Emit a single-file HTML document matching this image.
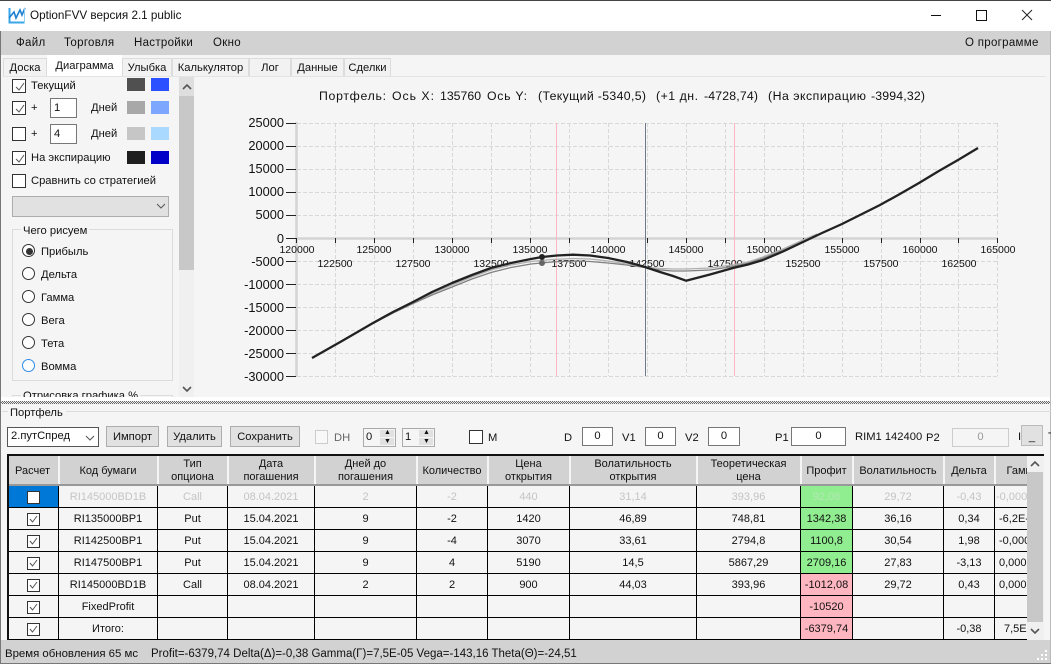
<!DOCTYPE html>
<html><head><meta charset="utf-8"><style>
html,body{margin:0;padding:0;background:#f5f5f5}
#w{position:relative;width:1051px;height:664px;overflow:hidden;background:#f5f5f5;font:11.2px "Liberation Sans","Noto Sans CJK SC",sans-serif;color:#111}
#w div,#w span.a{position:absolute;box-sizing:border-box}
.t{white-space:nowrap;line-height:14px}
.m{font-size:11.5px;letter-spacing:.3px}
.tab{top:58px;height:18px;background:#f2f2f2;border:1px solid #dcdcdc;border-bottom:0;text-align:center;line-height:18px;white-space:nowrap}
.cb{width:14px;height:14px;border:1px solid #333;background:#fff}
.cb svg{position:absolute;left:1px;top:1px}
.sw{width:18px;height:13px}
.in{border:1px solid #777;background:#fff;text-align:center;line-height:17px}
.btn{background:#e1e1e1;border:1px solid #adadad;text-align:center;line-height:18px;white-space:nowrap}
.rb{width:13px;height:13px;border:1px solid #333;border-radius:50%;background:#fff}
table{border-collapse:collapse;table-layout:fixed;position:absolute;left:-1px;top:0}
td{border:1px solid #000;padding:2px 0 0;text-align:center;height:19px;line-height:13px;white-space:nowrap;overflow:hidden;font-size:11px}
tr.h td{background:#d2d2d2;height:26px;padding-top:2px;border:0;border-right:2px solid #f5f5f5;border-bottom:2px solid #999;white-space:normal}
tr.g td{color:#c4c4c4}
.p{background:#90ee90}.n{background:#ffb6c1}
td svg{vertical-align:middle}
</style></head><body><div id="w">

<!-- title bar -->
<div style="left:0;top:0;width:1051px;height:31px;background:#fff;border-top:1px solid #444"></div>
<svg style="position:absolute;left:8px;top:6px" width="18" height="18" viewBox="0 0 18 18"><path d="M1.5 2V16.5H16.5" fill="none" stroke="#3aa6e8" stroke-width="2"/><path d="M1 12L6 6L8 12L12 4L14 9L17 2" fill="none" stroke="#1c7fd0" stroke-width="1.6"/><path d="M16.5 2V16" stroke="#8fd0f5" stroke-width="1"/></svg>
<div class="t" style="left:30px;top:9px;font-size:11.7px">OptionFVV версия 2.1 public</div>
<div style="left:931px;top:15px;width:10px;height:1px;background:#111"></div>
<div style="left:976px;top:10px;width:11px;height:11px;border:1px solid #111"></div>
<svg style="position:absolute;left:1021px;top:9px" width="12" height="12"><path d="M1 1L11 11M11 1L1 11" stroke="#222" stroke-width="1"/></svg>

<!-- menu -->
<div style="left:1px;top:31px;width:1050px;height:24px;background:#d2d2d2"></div>
<div class="t m" style="left:16px;top:36px">Файл</div>
<div class="t m" style="left:64px;top:36px">Торговля</div>
<div class="t m" style="left:134px;top:36px">Настройки</div>
<div class="t m" style="left:213px;top:36px">Окно</div>
<div class="t m" style="left:965px;top:36px">О программе</div>

<!-- tabs -->
<div class="tab" style="left:3px;width:44px">Доска</div>
<div class="tab" style="left:122px;width:50px">Улыбка</div>
<div class="tab" style="left:172px;width:77px">Калькулятор</div>
<div class="tab" style="left:249px;width:42px">Лог</div>
<div class="tab" style="left:291px;width:53px">Данные</div>
<div class="tab" style="left:344px;width:47px">Сделки</div>
<div class="tab" style="left:47px;top:55px;width:75px;height:22px;background:#fff;border:0;line-height:23px;">Диаграмма</div>
<div style="left:3px;top:76px;width:1043px;height:1px;background:#e4e4e4"></div>
<div style="left:0;top:31px;width:1px;height:633px;background:#777"></div>
<div style="left:1050px;top:31px;width:1px;height:633px;background:#bbb"></div>

<!-- left panel -->
<div style="left:3px;top:77px;width:191px;height:320px;overflow:hidden">
 <div class="cb" style="left:9px;top:2px"><svg width="12" height="12"><path d="M2 6L5 9L10 2" fill="none" stroke="#555" stroke-width="1"/></svg></div>
 <div class="t" style="left:28px;top:2px">Текущий</div>
 <div class="sw" style="left:124px;top:1px;background:#505050"></div>
 <div class="sw" style="left:148px;top:1px;background:#2b50ff"></div>

 <div class="cb" style="left:9px;top:24px"><svg width="12" height="12"><path d="M2 6L5 9L10 2" fill="none" stroke="#555" stroke-width="1"/></svg></div>
 <div class="t" style="left:28px;top:24px">+</div>
 <div class="in" style="left:47px;top:21px;width:27px;height:20px;text-align:left;padding-left:3px;line-height:18px">1</div>
 <div class="t" style="left:88px;top:24px">Дней</div>
 <div class="sw" style="left:124px;top:24px;background:#a8a8a8"></div>
 <div class="sw" style="left:148px;top:24px;background:#7da7ff"></div>

 <div class="cb" style="left:9px;top:50px"></div>
 <div class="t" style="left:28px;top:50px">+</div>
 <div class="in" style="left:47px;top:47px;width:27px;height:20px;text-align:left;padding-left:3px;line-height:18px">4</div>
 <div class="t" style="left:88px;top:50px">Дней</div>
 <div class="sw" style="left:124px;top:50px;background:#c6c6c6"></div>
 <div class="sw" style="left:148px;top:50px;background:#a9d9ff"></div>

 <div class="cb" style="left:9px;top:74px"><svg width="12" height="12"><path d="M2 6L5 9L10 2" fill="none" stroke="#555" stroke-width="1"/></svg></div>
 <div class="t" style="left:28px;top:74px">На экспирацию</div>
 <div class="sw" style="left:124px;top:74px;background:#1e1e1e"></div>
 <div class="sw" style="left:148px;top:74px;background:#0000c8"></div>

 <div class="cb" style="left:9px;top:97px"></div>
 <div class="t" style="left:28px;top:97px">Сравнить со стратегией</div>

 <div style="left:9px;top:119px;width:157px;height:21px;background:#e1e1e1;border:1px solid #adadad"></div>
 <svg style="position:absolute;left:153px;top:126px" width="10" height="7"><path d="M1 1L5 5L9 1" fill="none" stroke="#555"/></svg>

 <div style="left:9px;top:152px;width:161px;height:152px;border:1px solid #dcdcdc"></div>
 <div class="t" style="left:18px;top:147px;background:#f5f5f5;padding:0 2px">Чего рисуем</div>
 <div class="rb" style="left:19px;top:167px"></div><div style="left:23px;top:171px;width:7px;height:7px;border-radius:50%;background:#333"></div>
 <div class="t" style="left:38px;top:168px">Прибыль</div>
 <div class="rb" style="left:19px;top:190px"></div><div class="t" style="left:38px;top:191px">Дельта</div>
 <div class="rb" style="left:19px;top:213px"></div><div class="t" style="left:38px;top:214px">Гамма</div>
 <div class="rb" style="left:19px;top:236px"></div><div class="t" style="left:38px;top:237px">Вега</div>
 <div class="rb" style="left:19px;top:259px"></div><div class="t" style="left:38px;top:260px">Тета</div>
 <div class="rb" style="left:19px;top:282px;border-color:#2d8ceb"></div><div class="t" style="left:38px;top:283px">Вомма</div>

 <div style="left:9px;top:318px;width:161px;height:30px;border:1px solid #dcdcdc"></div>
 <div class="t" style="left:18px;top:312px;background:#f5f5f5;padding:0 2px">Отрисовка графика %</div>

 <!-- scrollbar -->
 <div style="left:176px;top:0;width:16px;height:320px;background:#f0f0f0"></div>
 <div style="left:176px;top:19px;width:16px;height:174px;background:#c8c8c8"></div>
 <div style="left:176px;top:0;width:16px;height:19px;background:#dedede"></div>
 <svg style="position:absolute;left:179px;top:7px" width="10" height="7"><path d="M1 5L5 1L9 5" fill="none" stroke="#555" stroke-width="1.6"/></svg>
 <svg style="position:absolute;left:179px;top:309px" width="10" height="7"><path d="M1 1L5 5L9 1" fill="none" stroke="#555" stroke-width="1.6"/></svg>
</div>

<!-- chart -->
<svg style="position:absolute;left:195px;top:77px" width="856" height="323" viewBox="195 77 856 323" font-family="Liberation Sans" fill="#111">
 <g font-size="12.3">
 <text x="319" y="100" textLength="67">Портфель:</text><text x="392" y="100" textLength="42">Ось X:</text><text x="440" y="100">135760</text><text x="487" y="100" textLength="40">Ось Y:</text><text x="538" y="100" textLength="108">(Текущий -5340,5)</text><text x="656" y="100" textLength="42">(+1 дн.</text><text x="704" y="100" textLength="54">-4728,74)</text><text x="768" y="100" textLength="98">(На экспирацию</text><text x="871" y="100" textLength="54">-3994,32)</text>
 </g>
 <g id="grid" stroke="#d8d8d8" stroke-width="1" stroke-dasharray="4 2" shape-rendering="crispEdges">
  <path d="M335.5 123V376M374.5 123V376M413.5 123V376M452.5 123V376M491.5 123V376M530.5 123V376M569.5 123V376M608.5 123V376M647.5 123V376M686.5 123V376M725.5 123V376M764.5 123V376M803.5 123V376M842.5 123V376M881.5 123V376M920.5 123V376M958.5 123V376M997.5 123V376"/>
  <path d="M297 123.5H998M297 146.5H998M297 169.5H998M297 192.5H998M297 215.5H998M297 261.5H998M297 284.5H998M297 307.5H998M297 330.5H998M297 353.5H998M297 376.5H998"/>
 </g>
 <path d="M296.5 122V377" stroke="#d4d4d4" stroke-width="2.5"/>
 <path d="M296 238.5H998" stroke="#d4d4d4" stroke-width="2.5"/>
 <path d="M286 123.5H296M286 146.5H296M286 169.5H296M286 192.5H296M286 215.5H296M286 238.5H296M286 261.5H296M286 284.5H296M286 307.5H296M286 330.5H296M286 353.5H296M286 376.5H296" stroke="#222" shape-rendering="crispEdges"/>
 <path d="M296.5 238V243M335.5 238V243M374.5 238V243M413.5 238V243M452.5 238V243M491.5 238V243M530.5 238V243M569.5 238V243M608.5 238V243M647.5 238V243M686.5 238V243M725.5 238V243M764.5 238V243M803.5 238V243M842.5 238V243M881.5 238V243M920.5 238V243M958.5 238V243M997.5 238V243" stroke="#222" shape-rendering="crispEdges"/>
 <path d="M556.5 123V376M734.5 123V376" stroke="#ffb6c1" shape-rendering="crispEdges"/>
 <path d="M645.5 123V376" stroke="#6e7a88" shape-rendering="crispEdges"/>
 <g font-size="12.8" text-anchor="end">
  <text x="284" y="127">25000</text><text x="284" y="150">20000</text><text x="284" y="173">15000</text><text x="284" y="196">10000</text><text x="284" y="219">5000</text><text x="284" y="243">0</text><text x="284" y="266">-5000</text><text x="284" y="289">-10000</text><text x="284" y="312">-15000</text><text x="284" y="335">-20000</text><text x="284" y="358">-25000</text><text x="284" y="381">-30000</text>
 </g>
 <g font-size="10.5" text-anchor="middle">
  <text x="297" y="253">120000</text><text x="374" y="253">125000</text><text x="452" y="253">130000</text><text x="530" y="253">135000</text><text x="608" y="253">140000</text><text x="686" y="253">145000</text><text x="764" y="253">150000</text><text x="842" y="253">155000</text><text x="920" y="253">160000</text><text x="998" y="253">165000</text>
  <text x="335" y="267">122500</text><text x="413" y="267">127500</text><text x="491" y="267">132500</text><text x="569" y="267">137500</text><text x="647" y="267">142500</text><text x="725" y="267">147500</text><text x="803" y="267">152500</text><text x="881" y="267">157500</text><text x="959" y="267">162500</text>
 </g>
 <polyline points="373,323.5 393,313 413,303.5 432,295 452,287 472,279 491,272.5 511,267.5 531,264 552,262 573,261 590,261.5 608,263 627,265 645,267.5 660,270 673,271 686,271 710,270 733,266.5 748,263 763,258 783,250 803,241 817,235" fill="none" stroke="#808080" stroke-width="1.3" stroke-linejoin="round"/>
 <polyline points="373,323 393,312.5 413,302.5 432,293.5 452,285 472,277 491,270 511,265 531,261.5 552,259.5 573,258.5 590,259 608,261 627,264 645,267 660,268.5 673,269 686,269 710,268 733,265 748,262 763,257 783,249 803,240 817,234" fill="none" stroke="#b0b0b0" stroke-width="1.3" stroke-linejoin="round"/>
 <polyline points="312,358 342,341 373,323 393,312 413,302 432,292 452,283 472,275 491,268 511,263 531,259 542,257 557,255.5 573,254.7 590,255.5 608,258 627,262 645,267 660,272 673,276 686,280.7 710,274.5 733,268 748,264.5 763,260 783,251.5 803,242 822,233 842,224 861,214.5 880,205 899,194.5 919,183 938,171.5 958,160 978,148" fill="none" stroke="#222" stroke-width="2.3" stroke-linejoin="round"/>
 <circle cx="542" cy="257" r="3" fill="#222"/><circle cx="542" cy="263" r="3" fill="#666"/>
</svg>

<!-- splitter -->
<div style="left:1px;top:397px;width:1049px;height:4px;background:#fff"></div>
<div style="left:1px;top:401px;width:1049px;height:3px;background:repeating-conic-gradient(#666 0 25%,#eee 0 50%) 0 0/2px 2px"></div>

<!-- portfolio -->
<div style="left:2px;top:411px;width:1049px;height:1px;background:#dcdcdc"></div>
<div class="t" style="left:8px;top:406px;background:#f5f5f5;padding:0 3px 0 2px">Портфель</div>
<div class="in" style="left:7px;top:427px;width:92px;height:20px;text-align:left;padding-left:3px;border-color:#555">2.путСпред</div>
<svg style="position:absolute;left:85px;top:435px" width="10" height="7"><path d="M1 1L5 5L9 1" fill="none" stroke="#555"/></svg>
<div class="btn" style="left:106px;top:426px;width:53px;height:21px;line-height:20px">Импорт</div>
<div class="btn" style="left:167px;top:426px;width:55px;height:21px;line-height:20px">Удалить</div>
<div class="btn" style="left:230px;top:426px;width:70px;height:21px;line-height:20px">Сохранить</div>
<div style="left:315px;top:430px;width:13px;height:14px;border:1px solid #ccc;background:#f8f8f8"></div>
<div class="t" style="left:334px;top:431px;color:#666">DH</div>
<div class="in" style="left:363px;top:428px;width:33px;height:19px;border-color:#aaa;text-align:left;padding-left:2px;background:#f5f5f5">0</div>
<div style="left:380px;top:430px;width:14px;height:7px;background:#e1e1e1"></div><div style="left:380px;top:438px;width:14px;height:7px;background:#e1e1e1"></div>
<div class="t" style="left:384px;top:426px;font-size:7px">▲</div><div class="t" style="left:384px;top:435px;font-size:7px">▼</div>
<div class="in" style="left:402px;top:428px;width:33px;height:19px;border-color:#aaa;text-align:left;padding-left:2px;background:#f5f5f5">1</div>
<div style="left:419px;top:430px;width:14px;height:7px;background:#e1e1e1"></div><div style="left:419px;top:438px;width:14px;height:7px;background:#e1e1e1"></div>
<div class="t" style="left:423px;top:426px;font-size:7px">▲</div><div class="t" style="left:423px;top:435px;font-size:7px">▼</div>
<div class="cb" style="left:469px;top:430px"></div>
<div class="t" style="left:488px;top:431px">M</div>
<div class="t" style="left:564px;top:431px">D</div>
<div class="in" style="left:582px;top:427px;width:31px;height:19px">0</div>
<div class="t" style="left:622px;top:431px">V1</div>
<div class="in" style="left:645px;top:427px;width:31px;height:19px">0</div>
<div class="t" style="left:685px;top:431px">V2</div>
<div class="in" style="left:708px;top:427px;width:32px;height:19px">0</div>
<div class="t" style="left:775px;top:431px">P1</div>
<div class="in" style="left:791px;top:427px;width:55px;height:19px">0</div>
<div class="t" style="left:855px;top:430px">RIM1 142400</div>
<div class="t" style="left:926px;top:431px">P2</div>
<div class="in" style="left:952px;top:428px;width:57px;height:19px;border-color:#ccc;background:#f5f5f5;color:#999">0</div>
<div class="t" style="left:1018px;top:430px">I</div>
<div class="btn" style="left:1021px;top:425px;width:22px;height:21px;border-color:#bbb;line-height:22px">_</div>
<div class="t" style="left:1048px;top:430px">T</div>

<!-- table -->
<div style="left:8px;top:456px;width:1019px;height:184px;overflow:hidden;background:#f5f5f5">
<table style="width:1045px">
<colgroup><col style="width:51px"><col style="width:99px"><col style="width:70px"><col style="width:87px"><col style="width:102px"><col style="width:71px"><col style="width:82px"><col style="width:127px"><col style="width:104px"><col style="width:52px"><col style="width:91px"><col style="width:51px"><col style="width:58px"></colgroup>
<tr class="h"><td>Расчет</td><td>Код бумаги</td><td>Тип<br>опциона</td><td>Дата<br>погашения</td><td>Дней до<br>погашения</td><td>Количество</td><td>Цена<br>открытия</td><td>Волатильность<br>открытия</td><td>Теоретическая<br>цена</td><td>Профит</td><td>Волатильность</td><td>Дельта</td><td style="text-align:left;padding-left:11px">Гамма</td></tr>
<tr class="g"><td style="background:#0078d7"><svg width="13" height="13"><rect x=".5" y=".5" width="12" height="12" fill="#fff" stroke="#333"/></svg></td><td>RI145000BD1B</td><td>Call</td><td>08.04.2021</td><td>2</td><td>-2</td><td>440</td><td>31,14</td><td>393,96</td><td class="p" style="color:#b4e8b4">92,08</td><td>29,72</td><td>-0,43</td><td style="text-align:left;padding-left:1px">-0,00085</td></tr>
<tr><td><svg width="13" height="13"><rect x=".5" y=".5" width="12" height="12" fill="#fff" stroke="#333"/><path d="M3 6L5.5 9L10 3" fill="none" stroke="#555"/></svg></td><td>RI135000BP1</td><td>Put</td><td>15.04.2021</td><td>9</td><td>-2</td><td>1420</td><td>46,89</td><td>748,81</td><td class="p">1342,38</td><td>36,16</td><td>0,34</td><td style="text-align:left;padding-left:4px">-6,2E-05</td></tr>
<tr><td><svg width="13" height="13"><rect x=".5" y=".5" width="12" height="12" fill="#fff" stroke="#333"/><path d="M3 6L5.5 9L10 3" fill="none" stroke="#555"/></svg></td><td>RI142500BP1</td><td>Put</td><td>15.04.2021</td><td>9</td><td>-4</td><td>3070</td><td>33,61</td><td>2794,8</td><td class="p">1100,8</td><td>30,54</td><td>1,98</td><td style="text-align:left;padding-left:4px">-0,00085</td></tr>
<tr><td><svg width="13" height="13"><rect x=".5" y=".5" width="12" height="12" fill="#fff" stroke="#333"/><path d="M3 6L5.5 9L10 3" fill="none" stroke="#555"/></svg></td><td>RI147500BP1</td><td>Put</td><td>15.04.2021</td><td>9</td><td>4</td><td>5190</td><td>14,5</td><td>5867,29</td><td class="p">2709,16</td><td>27,83</td><td>-3,13</td><td style="text-align:left;padding-left:4px">0,00085</td></tr>
<tr><td><svg width="13" height="13"><rect x=".5" y=".5" width="12" height="12" fill="#fff" stroke="#333"/><path d="M3 6L5.5 9L10 3" fill="none" stroke="#555"/></svg></td><td>RI145000BD1B</td><td>Call</td><td>08.04.2021</td><td>2</td><td>2</td><td>900</td><td>44,03</td><td>393,96</td><td class="n">-1012,08</td><td>29,72</td><td>0,43</td><td style="text-align:left;padding-left:4px">0,00085</td></tr>
<tr><td><svg width="13" height="13"><rect x=".5" y=".5" width="12" height="12" fill="#fff" stroke="#333"/><path d="M3 6L5.5 9L10 3" fill="none" stroke="#555"/></svg></td><td>FixedProfit</td><td></td><td></td><td></td><td></td><td></td><td></td><td></td><td class="n">-10520</td><td></td><td></td><td></td></tr>
<tr><td><svg width="13" height="13"><rect x=".5" y=".5" width="12" height="12" fill="#fff" stroke="#333"/><path d="M3 6L5.5 9L10 3" fill="none" stroke="#555"/></svg></td><td>Итого:</td><td></td><td></td><td></td><td></td><td></td><td></td><td></td><td class="n">-6379,74</td><td></td><td>-0,38</td><td style="text-align:left;padding-left:9px">7,5E-05</td></tr>
</table>
</div>
<div style="left:7px;top:454px;width:1037px;height:2px;background:#111"></div>
<div style="left:7px;top:454px;width:2px;height:186px;background:#111"></div>
<!-- table scrollbar -->
<div style="left:1027px;top:456px;width:17px;height:184px;background:#f0f0f0"></div>
<div style="left:1027px;top:472px;width:16px;height:150px;background:#c8c8c8"></div>
<svg style="position:absolute;left:1030px;top:461px" width="10" height="7"><path d="M1 5L5 1L9 5" fill="none" stroke="#555" stroke-width="1.6"/></svg>
<svg style="position:absolute;left:1030px;top:628px" width="10" height="7"><path d="M1 1L5 5L9 1" fill="none" stroke="#555" stroke-width="1.6"/></svg>

<!-- status -->
<div style="left:1px;top:640px;width:1049px;height:23px;background:#d2d2d2"></div>
<div style="left:0;top:663px;width:1051px;height:1px;background:#777"></div>
<div class="t" style="left:5px;top:647px;font-size:11.4px">Время обновления 65 мс</div>
<div class="t" style="left:151px;top:647px;font-size:11.5px">Profit=-6379,74 Delta(Δ)=-0,38 Gamma(Γ)=7,5E-05 Vega=-143,16 Theta(Θ)=-24,51</div>
<svg style="position:absolute;left:1036px;top:649px" width="12" height="12" fill="#fff"><rect x="9" y="1" width="2" height="2"/><rect x="5" y="5" width="2" height="2"/><rect x="9" y="5" width="2" height="2"/><rect x="1" y="9" width="2" height="2"/><rect x="5" y="9" width="2" height="2"/><rect x="9" y="9" width="2" height="2"/></svg>
</div></body></html>
